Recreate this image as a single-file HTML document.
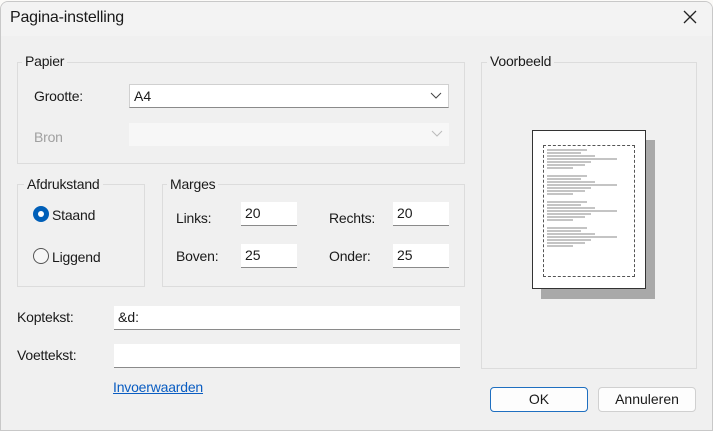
<!DOCTYPE html>
<html><head><style>
*{box-sizing:border-box;margin:0;padding:0}
body{width:713px;height:431px;background:#fbfaf8;font-family:"Liberation Sans",sans-serif;font-size:14px;color:#1a1a1a;position:relative;overflow:hidden}
.win{position:absolute;left:0;top:1px;width:713px;height:430px;background:#f0f0f0;border:1px solid #c8c8c8;border-radius:8px 8px 0 0;overflow:hidden}
.tb{position:absolute;left:0;top:0;width:100%;height:34px;background:#f3f3f3}
.a{position:absolute;letter-spacing:-0.2px}
.grp{position:absolute;border:1px solid #dcdcdc}
.lg{position:absolute;background:#f0f0f0;padding:0 3px;font-size:14px;color:#1a1a1a;letter-spacing:-0.2px}
.inp{position:absolute;background:#fff;border-bottom:1px solid #8a8a8a;padding:3px 4px;font-size:14px}
.dis{background:#f7f7f7;border-bottom:none}
.chev{position:absolute;right:6px;top:4px}
.btn{position:absolute;background:#fdfdfd;border:1px solid #d0d0d0;border-radius:4px;text-align:center;line-height:23px;font-size:14px}
.ln{height:2px;margin:1px 0 1px;background:#b5b5b5;opacity:.8}
</style></head><body>
<div class="win">
<div class="tb"></div>
<div class="a" style="left:9px;top:7px;font-size:16px">Pagina-instelling</div>
<svg class="a" style="left:681px;top:7px" width="16" height="16"><path d="M2 2L14 14M14 2L2 14" stroke="#222" stroke-width="1.3"/></svg>

<div class="grp" style="left:16px;top:60px;width:448px;height:102px"></div>
<div class="lg" style="left:21px;top:51px">Papier</div>
<div class="a" style="left:33px;top:86px">Grootte:</div>
<div class="inp" style="left:128px;top:82px;width:320px;height:24px;border:1px solid #d0d0d0;border-bottom:1px solid #8a8a8a">A4<svg class="chev" style="top:7px" width="12" height="8"><path d="M1 1L6 6L11 1" stroke="#444" fill="none"/></svg></div>
<div class="a" style="left:33px;top:127px;color:#a0a0a0">Bron</div>
<div class="inp dis" style="left:128px;top:121px;width:320px;height:23px"><svg class="chev" style="top:7px" width="12" height="8"><path d="M1 1L6 6L11 1" stroke="#bbb" fill="none"/></svg></div>

<div class="grp" style="left:16px;top:182px;width:128px;height:103px"></div>
<div class="lg" style="left:23px;top:174px">Afdrukstand</div>
<div class="a" style="left:32px;top:204px;width:16px;height:16px;border-radius:50%;background:#005fb8"><div style="position:absolute;left:5px;top:5px;width:6px;height:6px;border-radius:50%;background:#fff"></div></div>
<div class="a" style="left:51px;top:205px">Staand</div>
<div class="a" style="left:32px;top:246px;width:16px;height:16px;border-radius:50%;border:1px solid #555;background:#f6f6f6"></div>
<div class="a" style="left:51px;top:247px">Liggend</div>

<div class="grp" style="left:161px;top:182px;width:303px;height:103px"></div>
<div class="lg" style="left:166px;top:174px">Marges</div>
<div class="a" style="left:175px;top:208px">Links:</div>
<div class="inp" style="left:240px;top:200px;width:56px;height:24px">20</div>
<div class="a" style="left:328px;top:208px">Rechts:</div>
<div class="inp" style="left:392px;top:200px;width:56px;height:24px">20</div>
<div class="a" style="left:175px;top:246px">Boven:</div>
<div class="inp" style="left:240px;top:242px;width:56px;height:24px">25</div>
<div class="a" style="left:328px;top:246px">Onder:</div>
<div class="inp" style="left:392px;top:242px;width:56px;height:24px">25</div>

<div class="a" style="left:16px;top:307px">Koptekst:</div>
<div class="inp" style="left:113px;top:304px;width:346px;height:24px">&amp;d:</div>
<div class="a" style="left:16px;top:345px">Voettekst:</div>
<div class="inp" style="left:113px;top:342px;width:346px;height:24px"></div>
<div class="a" style="left:112px;top:377px;color:#0a5dc2;text-decoration:underline">Invoerwaarden</div>

<div class="grp" style="left:480px;top:60px;width:216px;height:307px"></div>
<div class="lg" style="left:486px;top:51px">Voorbeeld</div>
<div class="a" style="left:540px;top:138px;width:114px;height:159px;background:#a9a9a9"></div>
<div class="a" style="left:531px;top:128px;width:114px;height:159px;background:#fff;border:1px solid #333">
<div style="position:absolute;left:10px;top:14px;width:92px;height:132px;border:1px dashed #555;padding:2px 3px">
<div class="ln" style="width:40px"></div><div class="ln" style="width:34px"></div><div class="ln" style="width:48px"></div><div class="ln" style="width:70px"></div><div class="ln" style="width:44px"></div><div class="ln" style="width:38px"></div><div class="ln" style="width:26px"></div><div style="height:4px"></div>
<div class="ln" style="width:40px"></div><div class="ln" style="width:34px"></div><div class="ln" style="width:48px"></div><div class="ln" style="width:70px"></div><div class="ln" style="width:44px"></div><div class="ln" style="width:38px"></div><div class="ln" style="width:26px"></div><div style="height:4px"></div>
<div class="ln" style="width:40px"></div><div class="ln" style="width:34px"></div><div class="ln" style="width:48px"></div><div class="ln" style="width:70px"></div><div class="ln" style="width:44px"></div><div class="ln" style="width:38px"></div><div class="ln" style="width:26px"></div><div style="height:4px"></div>
<div class="ln" style="width:40px"></div><div class="ln" style="width:34px"></div><div class="ln" style="width:48px"></div><div class="ln" style="width:70px"></div><div class="ln" style="width:44px"></div><div class="ln" style="width:38px"></div><div class="ln" style="width:26px"></div>
</div></div>

<div class="btn" style="left:489px;top:385px;width:98px;height:25px;border:1px solid #1f6fc0">OK</div>
<div class="btn" style="left:597px;top:385px;width:98px;height:25px">Annuleren</div>
</div>
</body></html>
